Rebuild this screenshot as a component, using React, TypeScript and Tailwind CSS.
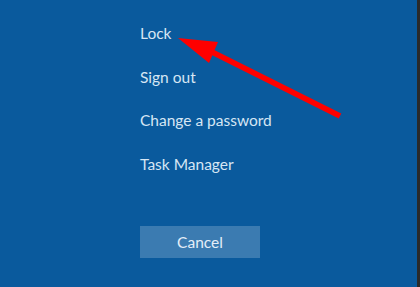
import React from "react";

const menuItems = ["Lock", "Sign out", "Change a password", "Task Manager"];

const App = () => {
  return (
    <div className="relative flex h-[287px] w-[420px] overflow-hidden bg-[#2a2a2a]">
      {/* Security options screen */}
      <div className="flex h-full w-[417px] flex-col bg-[#0a5a9d] pl-[140px] pt-[12px] font-['Lato','Noto_Sans',sans-serif]">
        <ul className="flex flex-col">
          {menuItems.map((item) => (
            <li
              key={item}
              className="flex h-[43.5px] items-center text-[15.5px] text-[#d6e6f4]"
            >
              {item}
            </li>
          ))}
        </ul>
        <button className="mt-[40px] flex h-[32px] w-[120px] items-center justify-center bg-[#3b7bb1] pt-[1px] text-[15.5px] text-[#e4eef8]">
          Cancel
        </button>
      </div>

      {/* Red annotation arrow */}
      <svg
        className="pointer-events-none absolute left-0 top-0"
        width="420"
        height="287"
        viewBox="0 0 420 287"
      >
        <line
          x1="212"
          y1="52"
          x2="340"
          y2="116"
          stroke="#ff0000"
          strokeWidth="5.5"
        />
        <polygon points="178,38 218,42 209,63" fill="#ff0000" />
      </svg>
    </div>
  );
};

export default App;
